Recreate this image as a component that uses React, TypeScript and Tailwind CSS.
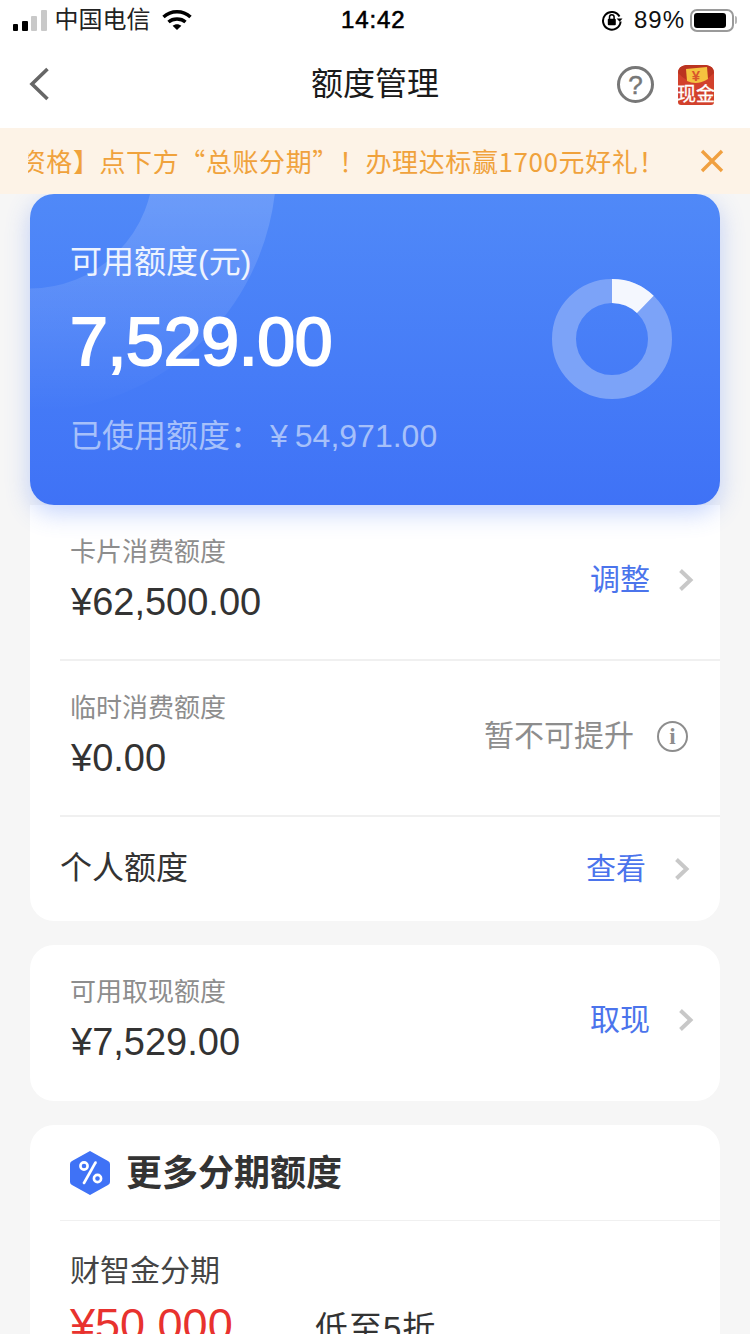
const FONT = '[font-family:"Liberation_Sans","Noto_Sans_CJK_SC",sans-serif]';

function Chevron() {
  return (
    <svg width="16" height="24" viewBox="0 0 16 24" fill="none" className="shrink-0">
      <path d="M2.5 2.5 12.5 12 2.5 21.5" stroke="#c8c8c8" strokeWidth="4" />
    </svg>
  );
}

function StatusBar() {
  return (
    <div className="relative h-[40px] flex items-center pl-[13px] pr-[13px] bg-white text-black">
      <div className="flex items-end gap-[3.5px] h-[21px]">
        <span className="w-[5px] h-[7px] rounded-[1px] bg-black" />
        <span className="w-[6px] h-[10px] rounded-[1px] bg-black" />
        <span className="w-[6px] h-[15px] rounded-[1px] bg-[#c9c9c9]" />
        <span className="w-[6px] h-[21px] rounded-[1px] bg-[#c9c9c9]" />
      </div>
      <span className="ml-[8px] text-[24px] leading-none text-[#222]">中国电信</span>
      <svg width="30" height="22" viewBox="0 0 30 22" className="ml-[11px]" fill="none" stroke="#000" strokeWidth="3.4">
        <path d="M1.5 8C9 1 21 1 28.5 8" />
        <path d="M6.5 13C11 9 19 9 23.5 13" />
        <path d="M15 21 10.6 16.7C13 14.6 17 14.6 19.4 16.7Z" fill="#000" stroke="none" />
      </svg>
      <span className="absolute left-[341px] text-[24px] leading-none tracking-[0.9px] [-webkit-text-stroke:0.6px_#000]">14:42</span>
      <div className="ml-auto flex items-center">
        <svg width="22" height="22" viewBox="0 0 22 22" fill="none">
          <path d="M18.5 7.5A8.8 8.8 0 1 0 19.6 12.5" stroke="#000" strokeWidth="2" />
          <path d="M21.5 9.5 18.6 12.8 15.6 9.5Z" fill="#000" />
          <rect x="6.8" y="9.8" width="8" height="6.4" rx="1" fill="#000" />
          <path d="M8.5 10V8a2.3 2.3 0 0 1 4.6 0v2" stroke="#000" strokeWidth="1.5" />
        </svg>
        <span className="ml-[11px] text-[24px] leading-none tracking-[1px] text-[#111]">89%</span>
        <div className="ml-[5px] w-[44px] h-[23px] rounded-[7px] border-[2px] border-[#9a9a9a] p-[2px]">
          <div className="w-[32px] h-full rounded-[3px] bg-black" />
        </div>
        <span className="ml-[1px] w-[2px] h-[8px] rounded-r-[2px] bg-[#b5b5b5]" />
      </div>
    </div>
  );
}

function NavBar() {
  return (
    <div className="relative h-[88px] flex items-center justify-center bg-white">
      <svg width="22" height="36" viewBox="0 0 22 36" fill="none" className="absolute left-[28px] top-[26px]">
        <path d="M19.5 3 4 18 19.5 33" stroke="#666" strokeWidth="3.6" />
      </svg>
      <span className="text-[32px] leading-none text-[#1a1a1a]">额度管理</span>
      <div className="absolute left-[617px] top-[26px] w-[37px] h-[37px] rounded-full border-[3px] border-[#777] flex items-center justify-center text-[26px] leading-none text-[#777] [-webkit-text-stroke:0.5px_#777]">
        ?
      </div>
      <svg width="40" height="42" viewBox="0 0 40 42" className="absolute left-[676px] top-[24px]">
        <path d="M2 9Q2 2 10 1H30Q38 2 38 9V38Q38 41 35 41H5Q2 41 2 38Z" fill="#d2412c" />
        <path d="M2 9Q2 2 10 1H30Q38 2 38 9Q20 28 2 9Z" fill="#bb3420" />
        <path d="M10 5 31 3 32 15Q21 22 11 17Z" fill="#f5c33f" />
        <text x="20" y="17" textAnchor="middle" fontSize="15" fontWeight="700" fill="#d9562c">¥</text>
        <text x="20" y="37" textAnchor="middle" fontSize="19" fill="#fff" stroke="#fff" strokeWidth="0.3">现金</text>
      </svg>
    </div>
  );
}

function Banner() {
  return (
    <div className="relative z-20 h-[66px] flex items-center bg-[#fdf3e7] pl-[28px]">
      <div className="w-[637px] overflow-hidden flex justify-end whitespace-nowrap text-[26px] leading-none tracking-[0.6px] text-[#f0a23c] [font-family:'Noto_Sans_CJK_SC',sans-serif]">
        <span className="shrink-0">【领取资格】点下方“总账分期”！办理达标赢1700元好礼！</span>
      </div>
      <svg width="24" height="24" viewBox="0 0 24 24" fill="none" className="ml-[35px]">
        <path d="M2 2 22 22M22 2 2 22" stroke="#f0a040" strokeWidth="3.4" />
      </svg>
    </div>
  );
}

function BalanceCard() {
  return (
    <div className="relative z-10 h-[311px] rounded-[24px] overflow-hidden bg-gradient-to-b from-[#5089f8] to-[#3f72f6] pl-[40px] pt-[49px]">
      {/* ring behind the text, fades out downwards */}
      <svg width="300" height="230" viewBox="0 0 300 230" className="absolute left-0 top-0">
        <defs>
          <linearGradient id="ringFade" gradientUnits="userSpaceOnUse" x1="0" y1="0" x2="0" y2="218">
            <stop offset="0" stopColor="#fff" stopOpacity="0.16" />
            <stop offset="0.5" stopColor="#fff" stopOpacity="0.09" />
            <stop offset="1" stopColor="#fff" stopOpacity="0" />
          </linearGradient>
        </defs>
        <circle cx="0" cy="-29" r="185" fill="none" stroke="url(#ringFade)" strokeWidth="123" />
      </svg>
      <div className="relative text-[32px] leading-[38px] text-white/90">可用额度(元)</div>
      <div className="relative mt-[29px] text-[68px] leading-[62px] text-white tracking-[-0.3px] [-webkit-text-stroke:2px_#fff]">7,529.00</div>
      <div className="relative mt-[45px] text-[32px] leading-[38px] text-[#a6c0fa] flex">
        <span>已使用额度：</span>
        <span className="ml-[8px]">¥</span>
        <span className="ml-[7px]">54,971.00</span>
      </div>
      <svg width="120" height="120" viewBox="0 0 120 120" className="absolute left-[522px] top-[85px]">
        <circle cx="60" cy="60" r="48" fill="none" stroke="#7ca3f8" strokeWidth="24" />
        <path d="M60 0A60 60 0 0 1 101.7 16.8L85 34.1A36 36 0 0 0 60 24Z" fill="#f4f7fe" />
      </svg>
    </div>
  );
}

function QuotaRow({ label, value, children }: { label: string; value: string; children: React.ReactNode }) {
  return (
    <div className="h-[154px] flex items-center pl-[41px] pb-[4px]">
      <div className="flex-1 self-start pt-[30px]">
        <div className="-ml-[1px] text-[26px] leading-[34px] text-[#8d8d8d]">{label}</div>
        <div className="mt-[10px] text-[38px] leading-[46px] text-[#333]">{value}</div>
      </div>
      {children}
    </div>
  );
}

function LinkAction({ text }: { text: string }) {
  return (
    <div className="flex items-center pr-[26px] gap-[28px]">
      <span className="text-[30px] leading-none text-[#4b74ec]">{text}</span>
      <Chevron />
    </div>
  );
}

function InfoIcon() {
  return (
    <div className="ml-[23px] mr-[32px] w-[31px] h-[31px] rounded-full border-[2px] border-[#8d8d8d] flex items-center justify-center text-[23px] leading-none font-bold text-[#8d8d8d] [font-family:'Liberation_Serif',serif]">
      i
    </div>
  );
}

function HexIcon() {
  return (
    <svg width="40" height="44" viewBox="0 0 40 44">
      <path d="M20 0 38 10Q40 11 40 13V31Q40 33 38 34L20 44 2 34Q0 33 0 31V13Q0 11 2 10Z" fill="#3f72f6" />
      <circle cx="14" cy="15" r="3.6" fill="none" stroke="#fff" strokeWidth="2.6" />
      <circle cx="27.5" cy="27.5" r="3.6" fill="none" stroke="#fff" strokeWidth="2.6" />
      <path d="M25.5 11.5 14 32" stroke="#fff" strokeWidth="2.6" strokeLinecap="round" />
    </svg>
  );
}

export default function App() {
  return (
    <div className={`w-[750px] h-[1334px] overflow-hidden bg-[#f6f6f6] ${FONT}`}>
      <div className="relative z-20">
        <StatusBar />
        <NavBar />
        <Banner />
      </div>
      <div className="px-[30px]">
        <div className="rounded-[24px] shadow-[0_8px_24px_rgba(64,114,246,0.3)] relative z-10">
          <BalanceCard />
        </div>

        <div className="bg-white rounded-b-[24px]">
          <QuotaRow label="卡片消费额度" value="¥62,500.00">
            <LinkAction text="调整" />
          </QuotaRow>
          <div className="ml-[30px] h-[2px] bg-[#f0f0f0]" />
          <QuotaRow label="临时消费额度" value="¥0.00">
            <span className="text-[30px] leading-none text-[#8d8d8d]">暂不可提升</span>
            <InfoIcon />
          </QuotaRow>
          <div className="ml-[30px] h-[2px] bg-[#f0f0f0]" />
          <div className="h-[104px] flex items-center justify-between pl-[30px] pb-[2px]">
            <span className="text-[32px] leading-none text-[#333]">个人额度</span>
            <div className="flex items-center pr-[30px] gap-[28px] pt-[2px]">
              <span className="text-[30px] leading-none text-[#4b74ec]">查看</span>
              <Chevron />
            </div>
          </div>
        </div>

        <div className="mt-[24px] bg-white rounded-[24px] pb-[2px]">
          <QuotaRow label="可用取现额度" value="¥7,529.00">
            <LinkAction text="取现" />
          </QuotaRow>
        </div>

        <div className="mt-[24px] bg-white rounded-[24px] h-[300px]">
          <div className="h-[95px] flex items-center pl-[40px] gap-[16px]">
            <HexIcon />
            <span className="pt-[3px] text-[36px] leading-none font-bold text-[#333]">更多分期额度</span>
          </div>
          <div className="ml-[30px] h-[1px] bg-[#f0f0f0]" />
          <div className="pl-[40px] pt-[32px]">
            <div className="text-[30px] leading-[36px] text-[#444]">财智金分期</div>
            <div className="mt-[10px] flex items-baseline">
              <span className="w-[245px] text-[45px] leading-[52px] text-[#e8322e]">¥50,000</span>
              <span className="text-[33px] leading-[52px] tracking-[1px] text-[#333]">低至5折</span>
            </div>
          </div>
        </div>
      </div>
    </div>
  );
}
